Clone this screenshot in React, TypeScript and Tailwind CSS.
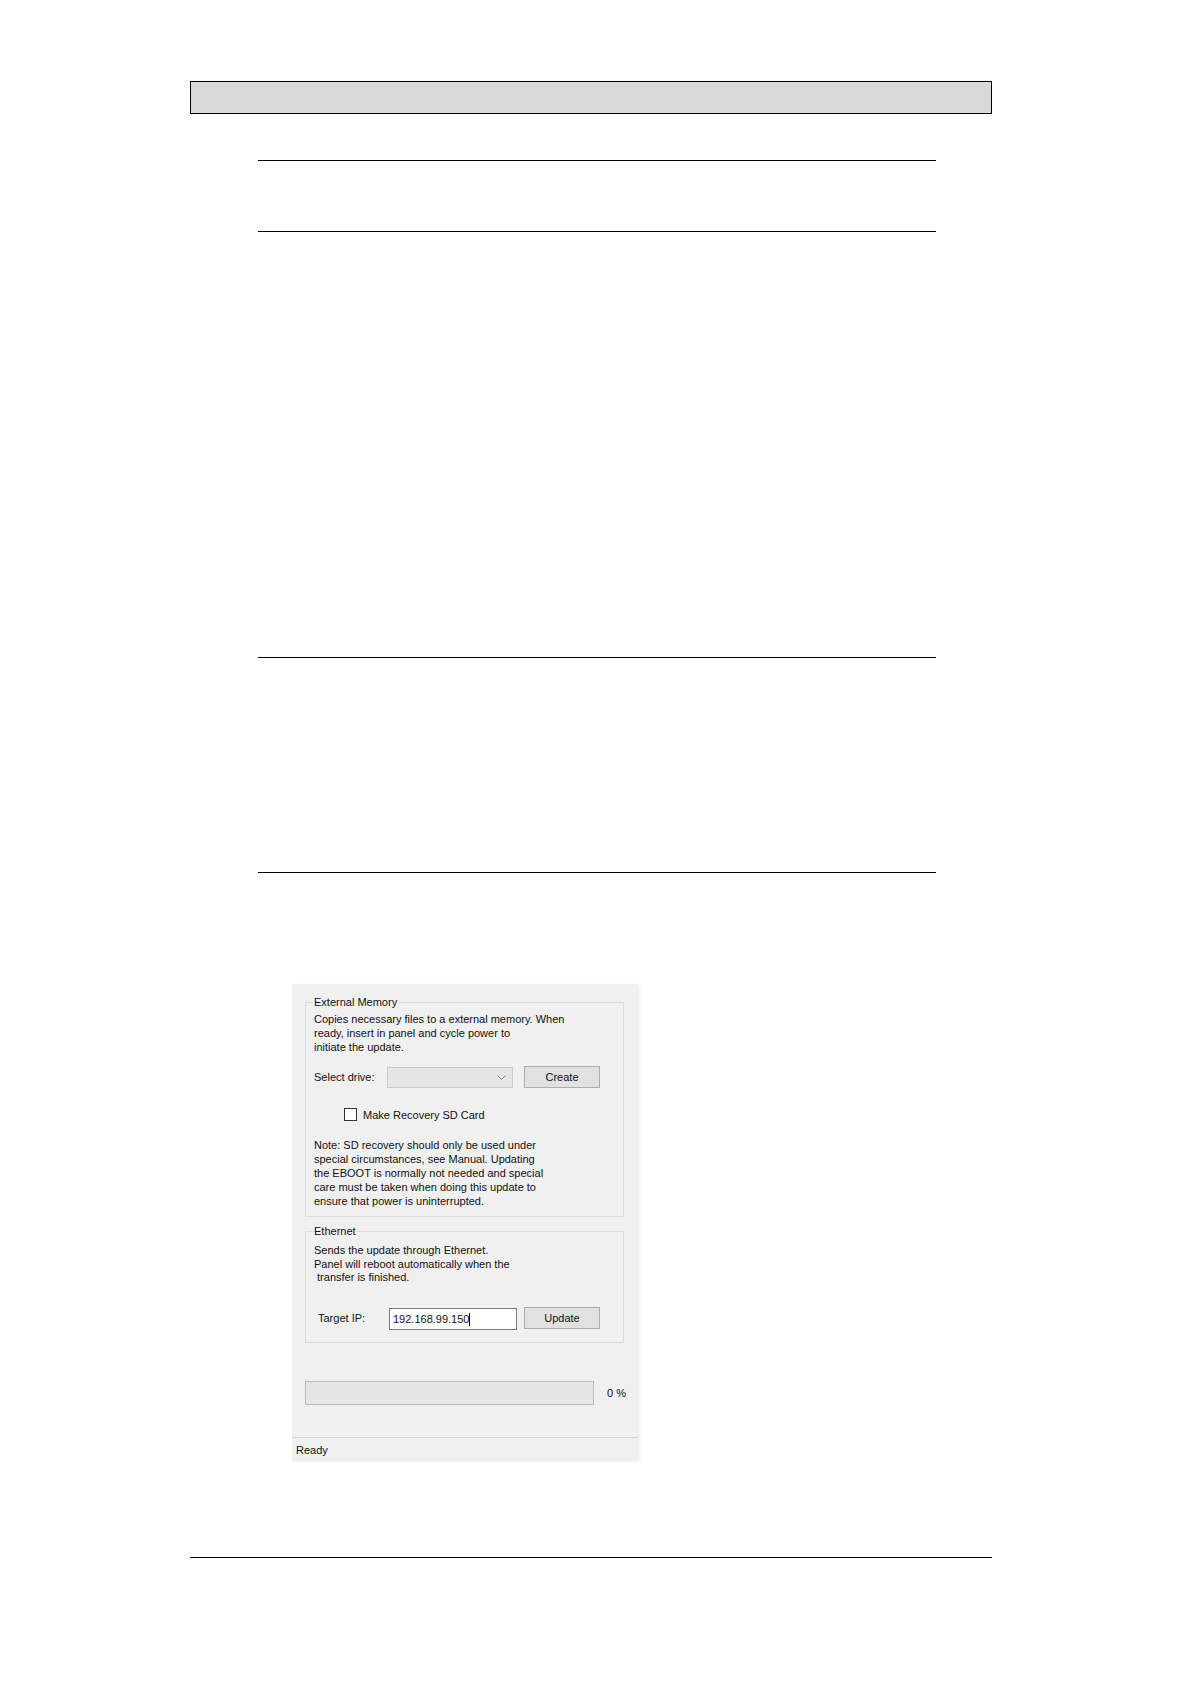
import React from "react";

const Rule = ({ className }: { className: string }) => <div className={`h-px bg-black ${className}`} />;

function WinButton({ label }: { label: string }) {
  return (
    <div className="ml-[11px] flex h-[22px] w-[76px] shrink-0 items-center justify-center border border-[#adadad] bg-[#e1e1e1]">
      {label}
    </div>
  );
}

function UpdateDialog() {
  return (
    <div className="ml-[292px] mt-[111px] flex h-[477px] w-[346px] flex-col bg-[#f0f0f0] text-[11px] leading-[14px] text-[#111] font-['Liberation_Sans',Arial,sans-serif] shadow-[2px_1px_3px_rgba(0,0,0,0.06)]">
      {/* External memory */}
      <fieldset className="mx-[13px] mt-[11px] w-[319px] border border-[#dcdcdc] px-[8px] pb-[8px]">
        <legend className="-ml-px px-px">External Memory</legend>
        <p className="mt-[3px]">
          Copies necessary files to a external memory. When
          <br />
          ready, insert in panel and cycle power to
          <br />
          initiate the update.
        </p>
        <div className="mt-[12px] flex h-[22px] items-center">
          <span className="w-[73px] shrink-0">Select drive:</span>
          <div className="flex h-[21px] w-[126px] shrink-0 items-center justify-end border border-[#cccccc] bg-[#e6e6e6] pr-[6px]">
            <svg width="9" height="5" viewBox="0 0 9 5" fill="none">
              <path d="M0.5 0.5 L4.5 4.5 L8.5 0.5" stroke="#7a7a7a" strokeWidth="1" />
            </svg>
          </div>
          <WinButton label="Create" />
        </div>
        <div className="ml-[30px] mt-[20px] flex h-[13px] items-center">
          <div className="h-[13px] w-[13px] border border-[#333] bg-white" />
          <span className="ml-[6px]">Make Recovery SD Card</span>
        </div>
        <p className="mt-[17px]">
          Note: SD recovery should only be used under
          <br />
          special circumstances, see Manual. Updating
          <br />
          the EBOOT is normally not needed and special
          <br />
          care must be taken when doing this update to
          <br />
          ensure that power is uninterrupted.
        </p>
      </fieldset>

      {/* Ethernet */}
      <fieldset className="mx-[13px] mt-[7px] w-[319px] border border-[#dcdcdc] px-[8px] pb-[12px]">
        <legend className="-ml-px px-px">Ethernet</legend>
        <p className="mt-[6px] leading-[13.5px]">
          Sends the update through Ethernet.
          <br />
          Panel will reboot automatically when the
          <br />
          &nbsp;transfer is finished.
        </p>
        <div className="ml-[4px] mt-[22px] flex h-[23px] items-center">
          <span className="w-[71px] shrink-0">Target IP:</span>
          <div className="mt-[2px] flex h-[22px] w-[128px] shrink-0 items-center border border-[#7a7a7a] bg-white pl-[3px]">
            192.168.99.150
            <span className="h-[13px] w-px bg-black" />
          </div>
          <div className="ml-[7px] flex h-[22px] w-[76px] shrink-0 items-center justify-center border border-[#adadad] bg-[#e1e1e1]">
            Update
          </div>
        </div>
      </fieldset>

      {/* Progress */}
      <div className="mx-[13px] mt-[38px] flex items-center">
        <div className="h-[24px] w-[289px] shrink-0 border border-[#bcbcbc] bg-[#e6e6e6]" />
        <span className="ml-[13px] whitespace-nowrap">0 %</span>
      </div>

      {/* Status bar */}
      <div className="mt-auto flex h-[24px] items-center border-t border-[#d7d7d7] pl-[4px]">Ready</div>
    </div>
  );
}

export default function App() {
  return (
    <div className="h-[1684px] w-[1190px] bg-white pt-[81px]">
      <div className="ml-[190px] h-[33px] w-[802px] border border-black bg-[#d9d9d9]" />

      <Rule className="ml-[258px] mt-[46px] w-[678px]" />
      <Rule className="ml-[258px] mt-[70px] w-[678px]" />
      <Rule className="ml-[258px] mt-[425px] w-[678px]" />
      <Rule className="ml-[258px] mt-[214px] w-[678px]" />

      <UpdateDialog />

      <Rule className="ml-[190px] mt-[96px] w-[802px]" />
    </div>
  );
}
